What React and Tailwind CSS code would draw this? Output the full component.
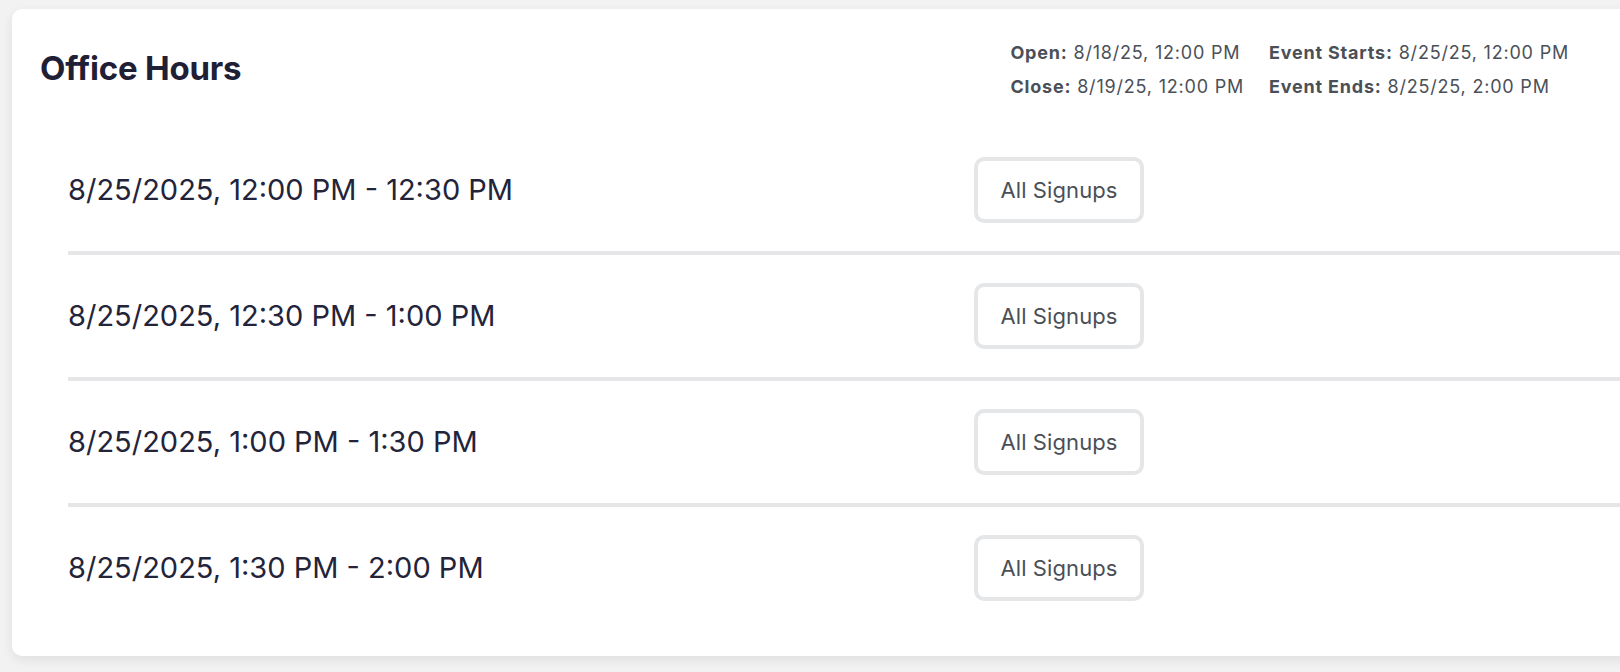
const slots = [
  "8/25/2025, 12:00 PM - 12:30 PM",
  "8/25/2025, 12:30 PM - 1:00 PM",
  "8/25/2025, 1:00 PM - 1:30 PM",
  "8/25/2025, 1:30 PM - 2:00 PM",
];

const MetaItem = ({ label, value }) => (
  <p className="whitespace-nowrap text-[18px] leading-[34px] tracking-[0.8px] text-[#4b5058]">
    <span className="font-bold">{label}</span> {value}
  </p>
);

export default function App() {
  return (
    <div
      className="h-[672px] w-full overflow-hidden bg-[#f2f2f2] pl-3 pt-[9px]"
      style={{ fontFamily: "Inter, 'Noto Sans', sans-serif" }}
    >
      <div className="w-[1640px] rounded-[10px] bg-white pb-[27px] shadow-[0_4px_12px_rgba(0,0,0,0.08)]">
        {/* header */}
        <div className="flex h-[120px] items-center justify-between pl-7 pr-[83px]">
          <h1 className="text-[33px] font-bold tracking-[-0.2px] text-[#1f2035]">
            Office Hours
          </h1>
          <div className="grid grid-cols-[auto_auto] gap-x-[25px] pt-px">
            <MetaItem label="Open:" value="8/18/25, 12:00 PM" />
            <MetaItem label="Event Starts:" value="8/25/25, 12:00 PM" />
            <MetaItem label="Close:" value="8/19/25, 12:00 PM" />
            <MetaItem label="Event Ends:" value="8/25/25, 2:00 PM" />
          </div>
        </div>

        {/* slots */}
        <div className="ml-14">
          {slots.map((slot, i) => (
            <div
              key={slot}
              className={
                i < slots.length - 1
                  ? "flex h-[126px] items-center border-b-4 border-[#e6e6e8]"
                  : "flex h-[122px] items-center"
              }
            >
              <p className="w-[906px] shrink-0 text-[29px] text-[#23243a]">
                {slot}
              </p>
              <button className="h-[66px] w-[170px] rounded-[10px] border-4 border-[#e5e6e8] bg-white text-[22px] tracking-[0.1px] text-[#4a4f57]">
                All Signups
              </button>
            </div>
          ))}
        </div>
      </div>
    </div>
  );
}
